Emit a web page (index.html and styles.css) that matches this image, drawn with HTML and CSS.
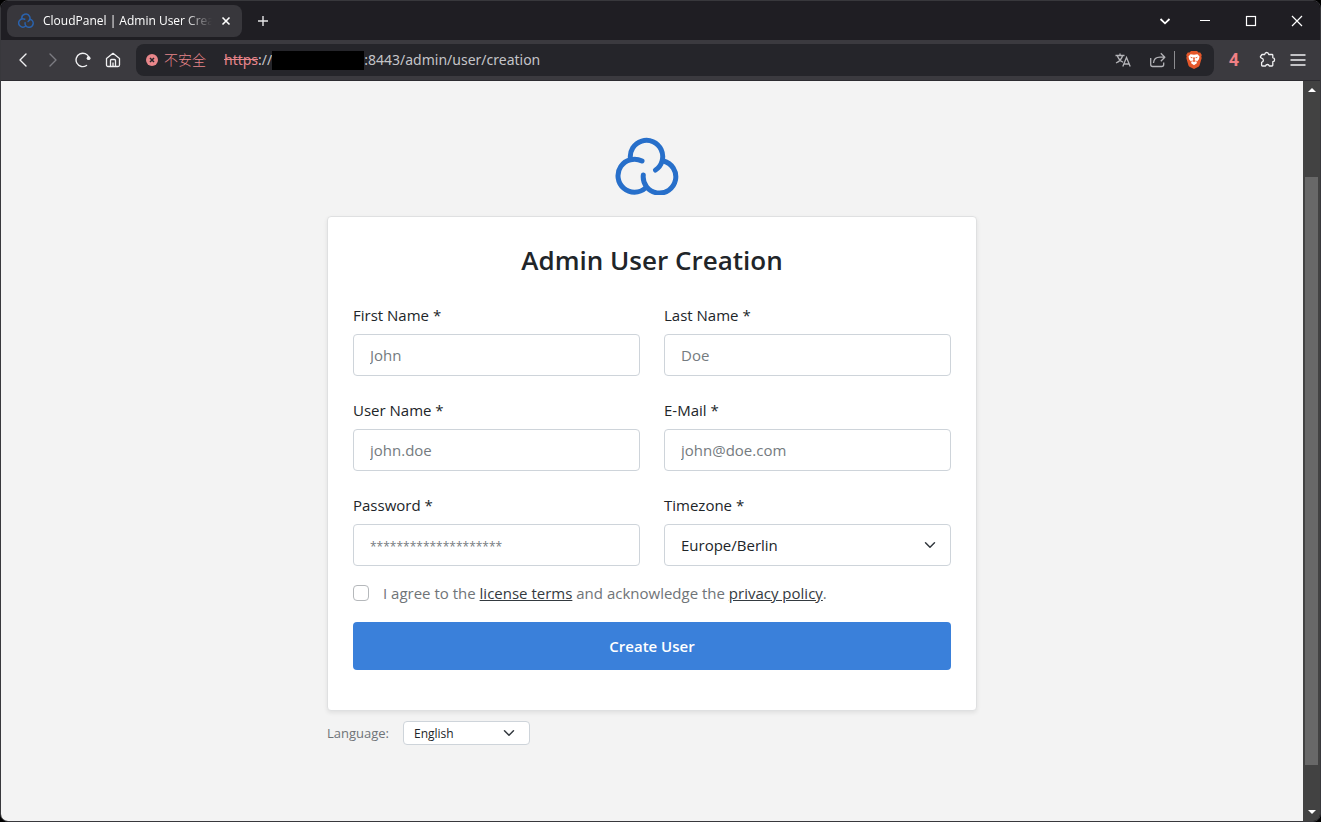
FILE: index.html
```html
<!DOCTYPE html>
<html lang="en">

<head>
    <meta charset="UTF-8">
    <meta name="viewport" content="width=device-width, initial-scale=1.0">
    <title>CloudPanel | Admin User Creation</title>
    <link rel="stylesheet" href="styles.css">
</head>

<body>
    <div class="window">
        <div class="titlebar">
            <div class="tab">
                <svg class="tab-icon" width="16" height="15" viewBox="0 0 64 58" fill="none" stroke="#2a62ac" stroke-width="6" stroke-linecap="round">
                    <path d="M15.5 22A16.2 16.2 0 1 1 40.5 33" />
                    <path d="M27 24A16.5 16.5 0 1 0 30.5 51" />
                    <path d="M28.3 38A16.3 16.3 0 1 0 48.5 24" />
                </svg>
                <span class="tab-title">CloudPanel | Admin User Creation</span>
                <button class="icon-btn" aria-label="Close tab">
                    <svg width="10" height="10" viewBox="0 0 10 10" stroke="#fff" stroke-width="1.6"><path d="M1.5 1.5l7 7M8.5 1.5l-7 7" /></svg>
                </button>
            </div>
            <button class="icon-btn new-tab" aria-label="New tab">
                <svg width="10" height="10" viewBox="0 0 10 10" stroke="#e6e6e8" stroke-width="1.4"><path d="M5 0v10M0 5h10" /></svg>
            </button>
            <div class="window-controls">
                <button class="control-btn tab-search" aria-label="Search tabs">
                    <svg width="12" height="12" viewBox="0 0 12 12" fill="none" stroke="#fff" stroke-width="1.8"><path d="M1.5 4L6 8.3 10.5 4" /></svg>
                </button>
                <button class="control-btn" aria-label="Minimize">
                    <svg width="12" height="12" viewBox="0 0 12 12" stroke="#fff"><path d="M1 5.5h10" /></svg>
                </button>
                <button class="control-btn" aria-label="Maximize">
                    <svg width="12" height="12" viewBox="0 0 12 12" fill="none" stroke="#fff" stroke-width="1.2"><rect x="1.5" y="1.5" width="9" height="9" /></svg>
                </button>
                <button class="control-btn" aria-label="Close">
                    <svg width="12" height="12" viewBox="0 0 12 12" stroke="#fff" stroke-width="1.2"><path d="M1 1l10 10M11 1L1 11" /></svg>
                </button>
            </div>
        </div>

        <div class="toolbar">
            <div class="nav-buttons">
                <button class="icon-btn" aria-label="Back">
                    <svg width="16" height="16" viewBox="0 0 16 16" fill="none" stroke="#f0f0f2" stroke-width="1.4" stroke-linecap="round" stroke-linejoin="round"><path d="M11 2L5 8l6 6" /></svg>
                </button>
                <button class="icon-btn" aria-label="Forward">
                    <svg width="16" height="16" viewBox="0 0 16 16" fill="none" stroke="#7c7c82" stroke-width="1.4" stroke-linecap="round" stroke-linejoin="round"><path d="M5 2l6 6-6 6" /></svg>
                </button>
                <button class="icon-btn" aria-label="Reload">
                    <svg width="16" height="16" viewBox="0 0 16 16" fill="none" stroke="#f0f0f2" stroke-width="1.4" stroke-linecap="round"><path d="M11.5 13.5A6.7 6.7 0 1 1 14 5.500" /><circle cx="13.600" cy="6.200" r="1.900" fill="#f0f0f2" stroke="none" /></svg>
                </button>
                <button class="icon-btn" aria-label="Home">
                    <svg width="16" height="16" viewBox="0 0 16 16" fill="none" stroke="#f0f0f2" stroke-width="1.3" stroke-linejoin="round"><path d="M1.5 6.5L8 1.3l6.5 5.2V13a1.5 1.5 0 0 1-1.5 1.5H3A1.5 1.5 0 0 1 1.5 13zM5.500 14.500V8.500a1 1 0 0 1 1-1h3a1 1 0 0 1 1 1v6M8 10.500v4" /></svg>
                </button>
            </div>
            <div class="address-bar">
                <svg width="12" height="12" viewBox="0 0 12 12"><circle cx="6" cy="6" r="6" fill="#e8868a" /><path d="M4 4l4 4M8 4L4 8" stroke="#25252a" stroke-width="1.5" /></svg>
                <span class="insecure" lang="zh-CN">不安全</span>
                <span class="url"><s>https</s>://<span class="redacted"></span>:8443/admin/user/creation</span>
                <div class="address-actions">
                    <button class="icon-btn" aria-label="Translate">
                        <svg width="16" height="16" viewBox="0 0 16 16" fill="none" stroke="#b4b4b8" stroke-width="1.3"><path d="M0.5 3.5h9M5 1.5v2M2.3 3.5C3.3 6.7 5 8.700 8 10.300M7.600 3.500C6.800 7 4.500 9.300 1 11M7.800 14.500L11.500 5.500l3.700 9M9 12h5" /></svg>
                    </button>
                    <button class="icon-btn share" aria-label="Share">
                        <svg width="18" height="16" viewBox="0 0 18 16" fill="none" stroke="#b4b4b8" stroke-width="1.3" stroke-linejoin="round"><path d="M1.7 6v6.5a2 2 0 0 0 2 2h9a2 2 0 0 0 2-2V10.500M4.500 11c.3-4 2.500-5.800 6.500-5.800h4.500M11.800 1.300l4 3.900-4 4" /></svg>
                    </button>
                    <button class="icon-btn brave" aria-label="Brave Shields">
                        <svg width="16" height="18" viewBox="0 0 16 18"><path fill="#e4572a" d="M5 0h6l1.5 1.6 1.7-.2L15.8 4l-.5 1.5.4 1.5-2 7a3 3 0 0 1-1.2 1.7L8 18l-4.500-2.300A3 3 0 0 1 2.300 14L.3 7l.4-1.500L.2 4l1.600-2.600 1.700.2z" /><path fill="#fff" d="M4.500 3.200L8 3.700l3.500-.5 2 2.300-.6 2.800-2 2.400.2 1.400L8 14.300l-3.100-2.200.2-1.400-2-2.400-.6-2.800z" /><path fill="#e4572a" d="M4 5.800l2.500.5-.4 1.200zM12 5.800l-2.500.5.4 1.200zM7 6.500h2l-.4 2.700L10 10l-2 1-2-1 1.400-.8zM5.200 9.300l1 1.800-.8.400zM10.800 9.300l-1 1.800.8.400z" /></svg>
                    </button>
                </div>
            </div>
            <div class="extensions">
                <button class="icon-btn ext-count">4</button>
                <button class="icon-btn" aria-label="Extensions">
                    <svg width="18" height="18" viewBox="0 0 18 18" fill="none" stroke="#f0f0f2" stroke-width="1.3" stroke-linejoin="round"><path d="M4 3.5h2.700c.2-1.300.9-2 2-2s1.800.7 2 2H14q.8 0 .8.800v2.400c1.100.1 1.800.9 1.800 2s-.7 1.900-1.800 2v3.500q0 .8-.8.800h-2.700c-.3-1-.9-1.500-1.900-1.500s-1.600.5-1.900 1.500H4.500q-.9 0-.9-.8v-2.900c1.200-.3 1.800-1 1.800-2s-.6-1.800-1.800-2.100c-1-.3-1.300-.9-1.100-1.700z" /></svg>
                </button>
                <button class="icon-btn" aria-label="Menu">
                    <svg width="16" height="14" viewBox="0 0 16 14" stroke="#f0f0f2" stroke-width="1.4"><path d="M.5 2h15M.5 7h15M.5 12h15" /></svg>
                </button>
            </div>
        </div>

        <div class="viewport">
            <main class="page">
                <div class="logo">
                    <svg width="64" height="58" viewBox="0 0 64 58" fill="none" stroke="#276fca" stroke-width="5" stroke-linecap="round">
                        <path d="M15.5 22A16.2 16.2 0 1 1 40.5 33" />
                        <path d="M27 24A16.5 16.5 0 1 0 30.5 51" />
                        <path d="M28.3 38A16.3 16.3 0 1 0 48.5 24" />
                    </svg>
                </div>
                <form class="card">
                    <h1>Admin User Creation</h1>
                    <div class="form-grid">
                        <div class="field">
                            <label for="first-name">First Name *</label>
                            <input type="text" id="first-name" placeholder="John">
                        </div>
                        <div class="field">
                            <label for="last-name">Last Name *</label>
                            <input type="text" id="last-name" placeholder="Doe">
                        </div>
                        <div class="field">
                            <label for="user-name">User Name *</label>
                            <input type="text" id="user-name" placeholder="john.doe">
                        </div>
                        <div class="field">
                            <label for="email">E-Mail *</label>
                            <input type="email" id="email" placeholder="john@doe.com">
                        </div>
                        <div class="field">
                            <label for="password">Password *</label>
                            <input type="password" id="password" placeholder="********************">
                        </div>
                        <div class="field">
                            <label for="timezone">Timezone *</label>
                            <select id="timezone">
                                <option>Europe/Berlin</option>
                            </select>
                        </div>
                    </div>
                    <div class="agree">
                        <input type="checkbox" id="agree">
                        <label for="agree">I agree to the <a href="#">license terms</a> and acknowledge the <a href="#">privacy policy</a>.</label>
                    </div>
                    <button type="submit" class="submit">Create User</button>
                </form>
                <div class="language">
                    <label for="language">Language:</label>
                    <select id="language">
                        <option>English</option>
                    </select>
                </div>
            </main>
            <div class="scrollbar">
                <svg width="8" height="16" viewBox="0 0 8 16" fill="#fff"><path d="M0 11l4-4 4 4z" /></svg>
                <div class="track">
                    <div class="thumb"></div>
                </div>
                <svg width="8" height="16" viewBox="0 0 8 16" fill="#fff"><path d="M0 5l4 4 4-4z" /></svg>
            </div>
        </div>
    </div>
</body>

</html>
```

FILE: styles.css
```css
* {
    box-sizing: border-box;
}

body {
    margin: 0;
    background: #000;
    color: #212529;
    font-family: "Open Sans", "Noto Sans", "Noto Sans CJK SC", sans-serif;
    font-size: 15px;
    line-height: 24px;
}

button,
input,
select {
    font: inherit;
}

svg {
    display: block;
    flex-shrink: 0;
}

.window {
    display: flex;
    flex-direction: column;
    min-height: 100vh;
    border: 1px solid #38383c;
    border-radius: 8px;
    overflow: hidden;
}

/* browser chrome */
.icon-btn,
.control-btn {
    display: flex;
    align-items: center;
    justify-content: center;
    padding: 0;
    border: 0;
    background: none;
}

.titlebar {
    display: flex;
    align-items: center;
    height: 39px;
    padding-left: 6px;
    background: #1f1e23;
}

.tab {
    display: flex;
    align-items: center;
    gap: 9px;
    width: 235px;
    height: 32px;
    padding: 0 11px;
    border-radius: 8px;
    background: #38373c;
}

.tab-title {
    flex: 1;
    overflow: hidden;
    white-space: nowrap;
    font-family: "Open Sans", sans-serif;
    font-size: 12px;
    color: #fff;
    mask-image: linear-gradient(to right, #000 84%, transparent);
}

.new-tab {
    margin-left: 16px;
}

.window-controls {
    display: flex;
    margin-left: auto;
}

.control-btn {
    width: 46px;
    height: 38px;
}

.tab-search {
    width: 34px;
}

.toolbar {
    display: flex;
    align-items: center;
    height: 41px;
    padding: 0 14px;
    background: #3b3a3f;
    border-bottom: 1px solid #2c2b30;
}

.nav-buttons {
    display: flex;
    gap: 14px;
    margin-right: 15px;
}

.address-bar {
    display: flex;
    flex: 1;
    align-items: center;
    height: 32px;
    padding: 0 12px 0 10px;
    border-radius: 8px;
    background: #25252a;
    font-family: "Noto Sans", "Noto Sans CJK SC", sans-serif;
    font-size: 14px;
}

.insecure {
    margin: 0 18px 0 6px;
    color: #e8868a;
    font-weight: 300;
}

.url {
    display: flex;
    align-items: center;
    color: #c4c4c8;
}

.url s {
    color: #e8868a;
}

.redacted {
    width: 92px;
    height: 19px;
    background: #000;
}

.address-actions {
    display: flex;
    align-items: center;
    margin-left: auto;
}

.share {
    margin-left: 18px;
}

.brave {
    height: 18px;
    margin-left: 7px;
    padding-left: 11px;
    border-left: 1px solid #8c8c90;
}

.extensions {
    display: flex;
    align-items: center;
    gap: 14px;
    margin-left: 14px;
}

.ext-count {
    width: 12px;
    margin-right: 4px;
    color: #f08085;
    font-family: Roboto, sans-serif;
    font-size: 18px;
    font-weight: 700;
}

/* page */
.viewport {
    display: flex;
    flex: 1;
}

.page {
    flex: 1;
    padding: 56px 24px;
    background: #f3f3f3;
}

.logo {
    display: flex;
    justify-content: center;
    margin-bottom: 21px;
    padding-right: 10px;
}

.card {
    max-width: 650px;
    margin: 0 auto;
    padding: 25px 25px 40px;
    border: 1px solid #dfe0e1;
    border-radius: 4px;
    background: #fff;
    box-shadow: 0 2px 4px rgba(0, 0, 0, 0.08);
}

h1 {
    margin: 0 0 24px;
    font-size: 26px;
    font-weight: 600;
    line-height: 36px;
    text-align: center;
}

.form-grid {
    display: grid;
    grid-template-columns: 1fr 1fr;
    gap: 21px 24px;
}

.field label {
    display: block;
    margin-bottom: 6px;
    line-height: 26px;
}

.field input,
.field select {
    display: block;
    width: 100%;
    height: 42px;
    padding: 0 16px;
    border: 1px solid #ced4da;
    border-radius: 4px;
    background-color: #fff;
    color: #212529;
}

input::placeholder {
    color: #757b80;
    opacity: 1;
}

input[type="password"]::placeholder {
    font-size: 12px;
}

select {
    appearance: none;
    background: #fff url("data:image/svg+xml,%3Csvg xmlns='http://www.w3.org/2000/svg' viewBox='0 0 16 16'%3E%3Cpath fill='none' stroke='%23343a40' stroke-linecap='round' stroke-linejoin='round' stroke-width='2' d='m2 5 6 6 6-6'/%3E%3C/svg%3E") no-repeat right 14px center / 12px;
}

.agree {
    display: flex;
    align-items: center;
    gap: 14px;
    margin: 15px 0 17px;
    color: #6f7478;
}

.agree input {
    appearance: none;
    width: 16px;
    height: 16px;
    margin: 0;
    border: 1px solid #b5b8bb;
    border-radius: 4px;
    background: #fff;
}

.agree a {
    color: #343a40;
}

.submit {
    display: block;
    width: 100%;
    height: 48px;
    border: 0;
    border-radius: 4px;
    background: #3a80da;
    color: #fff;
    font-weight: 600;
}

.language {
    display: flex;
    align-items: center;
    gap: 14px;
    max-width: 650px;
    margin: 10px auto 0;
    color: #6f7478;
    font-size: 13px;
}

.language select {
    width: 127px;
    height: 24px;
    padding: 0 10px;
    border: 1px solid #ced4da;
    border-radius: 4px;
    color: #212529;
    font-size: 12px;
}

.scrollbar {
    display: flex;
    flex-direction: column;
    align-items: center;
    width: 17px;
    background: #424242;
}

.track {
    flex: 1;
    width: 13px;
}

.thumb {
    height: 83%;
    margin-top: 80px;
    background: #686868;
}
```
